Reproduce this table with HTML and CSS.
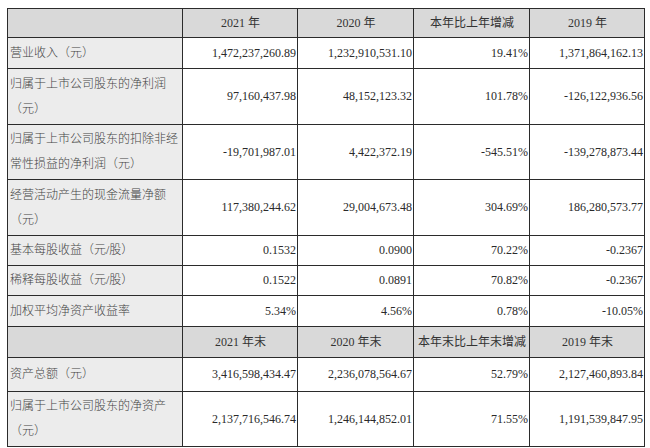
FILE: index.html
```html
<!DOCTYPE html>
<html lang="zh-CN">
<head>
<meta charset="utf-8">
<link rel="stylesheet" href="styles.css">
</head>
<body>
<div class="page">
<table class="fin">
<colgroup>
<col class="c1"><col class="c2"><col class="c3"><col class="c4"><col class="c5">
</colgroup>
<tr class="head h29">
<td class="lab"></td><td>2021 年</td><td>2020 年</td><td>本年比上年增减</td><td>2019 年</td>
</tr>
<tr class="h31">
<td class="lab">营业收入（元）</td><td>1,472,237,260.89</td><td>1,232,910,531.10</td><td>19.41%</td><td>1,371,864,162.13</td>
</tr>
<tr class="h56">
<td class="lab">归属于上市公司股东的净利润<br>（元）</td><td>97,160,437.98</td><td>48,152,123.32</td><td>101.78%</td><td>-126,122,936.56</td>
</tr>
<tr class="h55">
<td class="lab">归属于上市公司股东的扣除非经<br>常性损益的净利润（元）</td><td>-19,701,987.01</td><td>4,422,372.19</td><td>-545.51%</td><td>-139,278,873.44</td>
</tr>
<tr class="h56">
<td class="lab">经营活动产生的现金流量净额<br>（元）</td><td>117,380,244.62</td><td>29,004,673.48</td><td>304.69%</td><td>186,280,573.77</td>
</tr>
<tr class="h30">
<td class="lab">基本每股收益（元/股）</td><td>0.1532</td><td>0.0900</td><td>70.22%</td><td>-0.2367</td>
</tr>
<tr class="h30">
<td class="lab">稀释每股收益（元/股）</td><td>0.1522</td><td>0.0891</td><td>70.82%</td><td>-0.2367</td>
</tr>
<tr class="h31">
<td class="lab">加权平均净资产收益率</td><td>5.34%</td><td>4.56%</td><td>0.78%</td><td>-10.05%</td>
</tr>
<tr class="head h31">
<td class="lab"></td><td>2021 年末</td><td>2020 年末</td><td>本年末比上年末增减</td><td>2019 年末</td>
</tr>
<tr class="h34">
<td class="lab">资产总额（元）</td><td>3,416,598,434.47</td><td>2,236,078,564.67</td><td>52.79%</td><td>2,127,460,893.84</td>
</tr>
<tr class="h55">
<td class="lab">归属于上市公司股东的净资产<br>（元）</td><td>2,137,716,546.74</td><td>1,246,144,852.01</td><td>71.55%</td><td>1,191,539,847.95</td>
</tr>
</table>
</div>
</body>
</html>
```

FILE: styles.css
```css
html, body {
  margin: 0;
  padding: 0;
  background: #ffffff;
}
.page {
  padding: 8px 0 0 7px;
}
.fin {
  border-collapse: collapse;
  table-layout: fixed;
  width: 638px;
  font-family: "Liberation Serif", "Noto Sans CJK SC", serif;
  font-size: 12px;
  color: #2a2a2a;
}
.c1 { width: 175px; }
.c2 { width: 115px; }
.c3 { width: 116px; }
.c4 { width: 116px; }
.c5 { width: 115px; }
.fin td {
  border: 1px solid #2b2b2b;
  padding: 0 1px 0 2px;
  text-align: right;
  vertical-align: middle;
  white-space: nowrap;
  line-height: 25px;
  background: #ffffff;
}
.fin td.lab {
  text-align: left;
  background: #ececec;
  color: #444;
  font-weight: 300;
}
.fin tr.head td {
  background: #d9d9d9;
  text-align: center;
  color: #333;
}
.h29 { height: 29px; }
.h30 { height: 30px; }
.h31 { height: 31px; }
.h34 { height: 34px; }
.h55 { height: 55px; }
.h56 { height: 56px; }
```
